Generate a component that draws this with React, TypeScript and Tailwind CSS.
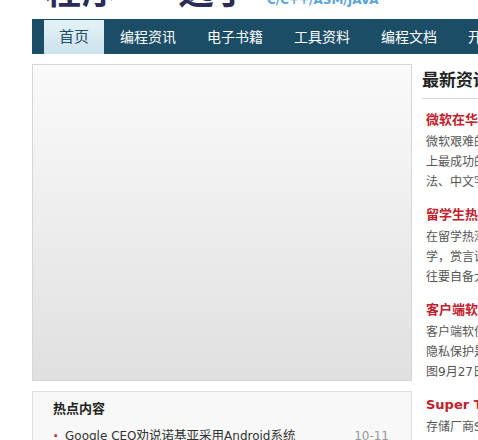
const CJK = "font-['DejaVu_Sans','Noto_Sans_CJK_SC',sans-serif]"

const navItems = ["编程资讯", "电子书籍", "工具资料", "编程文档", "开发工具"]

const news = [
  { title: "微软在华发展之路", lines: ["微软艰难的中国之路", "上最成功的软件公司", "法、中文字符集标准"] },
  { title: "留学生热衷编程", lines: ["在留学热潮的带动下", "学，赏言语不通等问", "往要自备大量的资料"] },
  { title: "客户端软件安全", lines: ["客户端软件存在漏洞", "隐私保护是重要问题", "图9月27日消息称"] },
  { title: "Super Talent", lines: ["存储厂商Super Talent"] },
]

export default function App() {
  return (
    <div className={`h-[440px] w-[478px] overflow-hidden bg-white ${CJK}`}>
      <div className="ml-8 flex h-[19px] items-end overflow-hidden">
        <div className="relative flex h-[19px] w-full items-start">
          <span className="ml-[13px] mt-[-28px] w-[133px] flex-none text-[36px] leading-[40px] font-bold tracking-[1px] text-[#2b2b55]">程序</span>
          <span className="mt-[-28px] w-[89px] flex-none text-[36px] leading-[40px] font-bold text-[#2b2b55]">选手</span>
          <span className="mt-[-8px] text-[12px] leading-[16px] font-bold whitespace-nowrap text-[#5aa5dc]">C/C++/ASM/JAVA</span>
        </div>
      </div>

      <nav className="ml-8 flex h-[35px] w-[500px] items-end overflow-hidden bg-[#1c4d67] pl-3">
        <a className="flex h-[34px] w-[60px] flex-none items-center justify-center bg-gradient-to-b from-[#e4f2f6] to-[#cde2ec] text-[15px] text-[#1c4d67]">
          首页
        </a>
        {navItems.map((item) => (
          <a key={item} className="flex h-[34px] w-[87px] flex-none items-center pl-4 text-[14px] whitespace-nowrap text-white">
            {item}
          </a>
        ))}
      </nav>

      <div className="mt-[10px] ml-8 flex w-[600px] items-start gap-[10px]">
        <div className="w-[380px] flex-none">
          <div className="h-[317px] border border-[#d6d6d6] bg-gradient-to-b from-[#fafafa] to-[#e0e0e0]" />
          <div className="mt-[10px] h-[60px] border border-[#dedede] bg-[#f8f8f8] pt-2 pl-5">
            <h3 className="text-[13px] leading-[18px] font-bold text-[#222]">热点内容</h3>
            <div className="mt-[9px] flex items-center pr-[22px] text-[12px] leading-[18px]">
              <span className="w-3 text-[14px] font-bold text-[#c1272d]">·</span>
              <span className="flex-1 whitespace-nowrap text-[#333]">
                Google CEO<span className="text-[12.5px]">劝说诺基亚采用</span>Android<span className="text-[12.5px]">系统</span>
              </span>
              <span className="text-[#999]">10-11</span>
            </div>
          </div>
        </div>

        <aside className="w-[190px] flex-none pt-px">
          <h2 className="h-[34px] border-b border-[#d6d6d6] pt-[3px] text-[17px] leading-[24px] font-bold text-[#222]">最新资讯</h2>
          <div className="flex flex-col gap-[13px] pt-[11px] pl-1">
            {news.map((n) => (
              <div key={n.title}>
                <h4 className="mb-[2px] text-[13px] leading-[20px] font-bold whitespace-nowrap text-[#c1202c]">{n.title}</h4>
                {n.lines.map((line) => (
                  <p key={line} className="text-[12px] leading-[20px] whitespace-nowrap text-[#555]">{line}</p>
                ))}
              </div>
            ))}
          </div>
        </aside>
      </div>
    </div>
  )
}
